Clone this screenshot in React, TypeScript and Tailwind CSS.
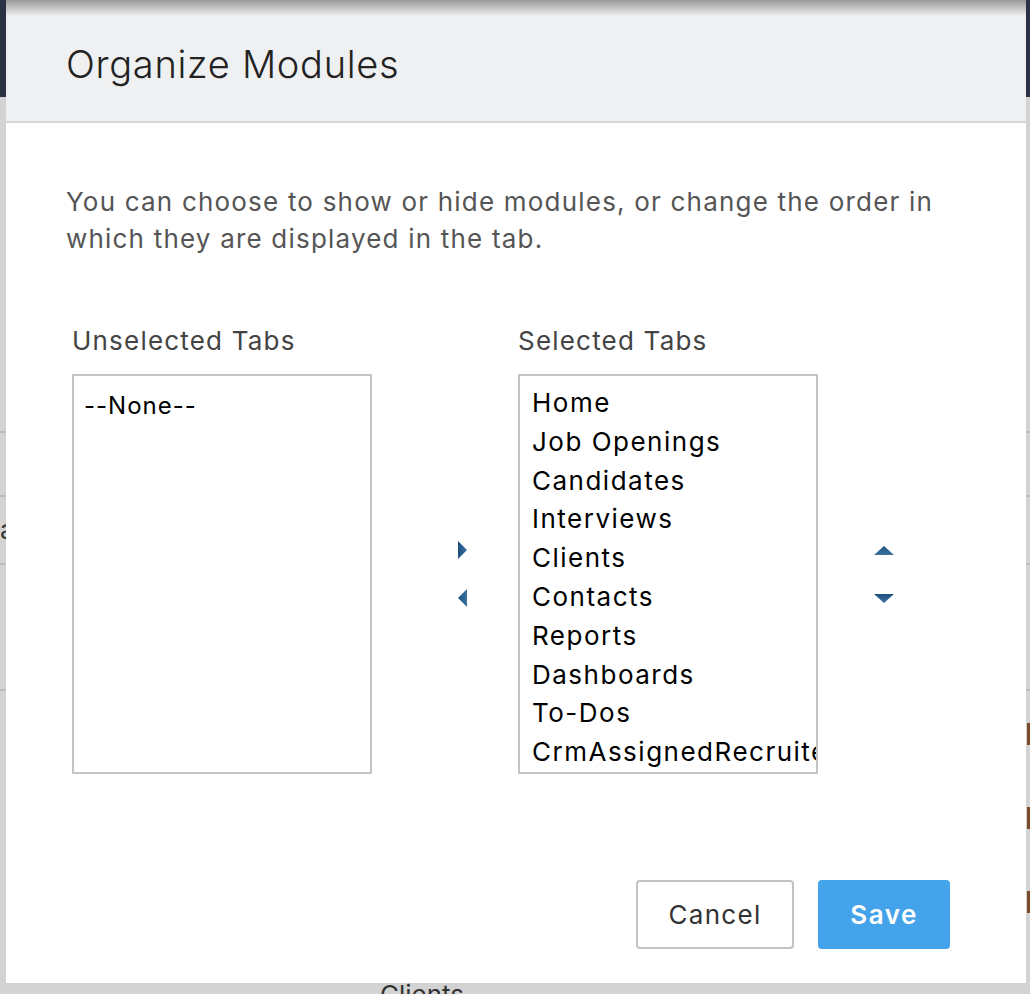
import React from "react";

const selected = [
    "Home",
    "Job Openings",
    "Candidates",
    "Interviews",
    "Clients",
    "Contacts",
    "Reports",
    "Dashboards",
    "To-Dos",
    "CrmAssignedRecruiters",
];

function Arrow({ dir }: { dir: "right" | "left" | "up" | "down" }) {
    const paths: Record<string, string> = {
        right: "M1 1 L10 10 L1 19 Z",
        left: "M10 1 L1 10 L10 19 Z",
        up: "M1 10 L11 1 L21 10 Z",
        down: "M1 1 L11 10 L21 1 Z",
    };
    const horiz = dir === "right" || dir === "left";
    return (
        <svg width={horiz ? 11 : 22} height={horiz ? 20 : 11} viewBox={horiz ? "0 0 11 20" : "0 0 22 11"}>
            <defs>
                <linearGradient id={`g-${dir}`} x1="0" y1="0" x2={horiz ? "1" : "0"} y2={horiz ? "0" : "1"}>
                    <stop offset="0" stopColor="#1d4f7c" />
                    <stop offset="1" stopColor="#3c73a3" />
                </linearGradient>
            </defs>
            <path d={paths[dir]} fill={`url(#g-${dir})`} />
        </svg>
    );
}

export default function App() {
    return (
        <div
            className="relative h-[994px] w-[1030px] overflow-hidden bg-[#d3d3d3]"
            style={{ fontFamily: "Inter, 'Open Sans', sans-serif" }}
        >
            {/* ── background page peeking out ── */}
            <div className="h-[97px] bg-[#2a3142]" />
            <div className="border-b-2 border-[#bdbdbd] h-[336px]" />
            <div className="border-b-2 border-[#bdbdbd] h-[64px]" />
            <div className="border-b-2 border-[#bdbdbd] h-[68px]" />
            <div className="border-b-2 border-[#bdbdbd] h-[126px]" />
            <div className="absolute left-0 top-[517px] text-[26px] leading-none text-[#333]">a</div>
            <div className="absolute right-0 top-[723px] h-[22px] w-[3px] bg-[#7a4a2a]" />
            <div className="absolute right-0 top-[807px] h-[22px] w-[3px] bg-[#7a4a2a]" />
            <div className="absolute right-0 top-[891px] h-[22px] w-[3px] bg-[#7a4a2a]" />
            <div className="absolute left-[380px] top-[982px] text-[26px] leading-none text-[#333]">Clients</div>

            {/* ── Modal ── */}
            <div className="absolute left-[6px] top-0 flex h-[983px] w-[1020px] flex-col bg-white">
                <div className="relative flex h-[123px] items-center border-b-2 border-[#d6d6d6] bg-[#eff0f2] pl-[60px]">
                    <div className="pointer-events-none absolute inset-x-0 top-0 h-[16px] bg-gradient-to-b from-[#9a9a9a] to-[#eff0f2]" />
                    <h1 className="relative pt-[8px] text-[38px] font-light tracking-[0.7px] text-[#222]">Organize Modules</h1>
                </div>

                <div className="flex flex-1 flex-col px-[60px] pt-[60px]">
                    <p className="text-[26px] leading-[37px] tracking-[1.2px] text-[#555]">
                        You can choose to show or hide modules, or change the order in which they are displayed in the tab.
                    </p>

                    <div className="mt-[69px] flex items-start pl-[6px]">
                        <div className="flex flex-col">
                            <span className="text-[26px] leading-[30px] tracking-[1.2px] text-[#444]">Unselected Tabs</span>
                            <div className="mt-[18px] h-[400px] w-[300px] border-2 border-[#c4c4c4] px-[10px] pt-[10px] text-[24px] leading-[39px] tracking-[1px] text-black">
                                --None--
                            </div>
                        </div>

                        <div className="flex w-[146px] flex-col items-center gap-[28px] pl-[34px] pt-[214px]">
                            <Arrow dir="right" />
                            <Arrow dir="left" />
                        </div>

                        <div className="flex flex-col">
                            <span className="text-[26px] leading-[30px] tracking-[1.2px] text-[#444]">Selected Tabs</span>
                            <div className="mt-[18px] h-[400px] w-[300px] overflow-hidden whitespace-nowrap border-2 border-[#c4c4c4] px-[12px] pt-[8px] text-[26px] leading-[38.8px] tracking-[1.5px] text-black">
                                {selected.map((s) => (
                                    <div key={s}>{s}</div>
                                ))}
                            </div>
                        </div>

                        <div className="flex w-[132px] flex-col items-center gap-[37px] pt-[219px]">
                            <Arrow dir="up" />
                            <Arrow dir="down" />
                        </div>
                    </div>

                    <div className="mt-[106px] flex justify-end gap-[24px] pr-[16px]">
                        <button className="h-[69px] w-[158px] rounded-[4px] border-2 border-[#c2c2c2] bg-white text-[26px] tracking-[1.3px] text-[#333]">
                            Cancel
                        </button>
                        <button className="h-[69px] w-[132px] rounded-[4px] bg-[#44a3ea] text-[26px] font-semibold tracking-[1.5px] text-white">
                            Save
                        </button>
                    </div>
                </div>
            </div>
        </div>
    );
}
